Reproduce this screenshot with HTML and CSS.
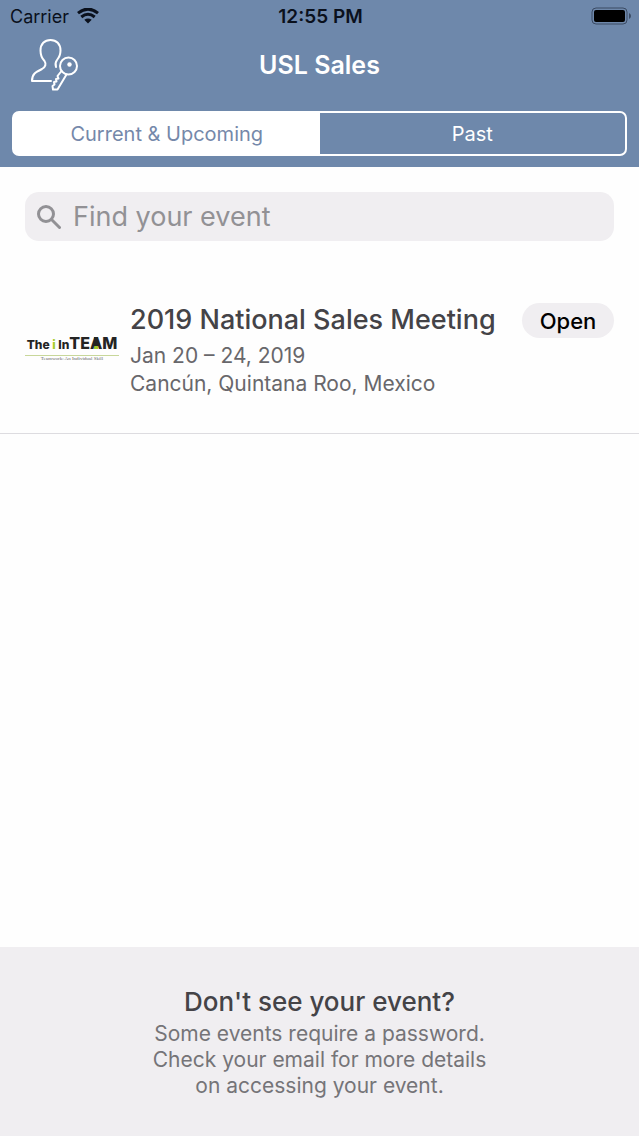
FILE: index.html
```html
<!DOCTYPE html>
<html lang="en">
<head>
  <meta charset="UTF-8">
  <meta name="viewport" content="width=device-width, initial-scale=1.0">
  <title>USL Sales</title>
  <link rel="stylesheet" href="styles.css">
</head>
<body>

  <header class="header">
    <div class="status-bar">
      <div class="carrier">
        <span>Carrier</span>
        <svg class="wifi" viewBox="0 0 22 16" aria-hidden="true">
          <path d="M1 5.2 Q11 -3 21 5.2" />
          <path d="M4.3 9 Q11 3.4 17.7 9" />
          <path class="wifi-dot" d="M7.3 11.8 Q11 9 14.7 11.8 L11 15.6 Z" />
        </svg>
      </div>
      <span class="time">12:55 PM</span>
      <svg class="battery" viewBox="0 0 40 18" aria-hidden="true">
        <rect class="battery-case" x="1" y="1" width="35" height="16" rx="4" />
        <rect x="3" y="3" width="31" height="12" rx="2" />
        <path class="battery-tip" d="M38 6 Q40 7 40 9 Q40 11 38 12 Z" />
      </svg>
    </div>

    <div class="nav-bar">
      <button class="login" type="button" aria-label="Log in">
        <svg viewBox="0 0 48 52" aria-hidden="true">
          <path d="M26 28 C25 25 25 23.500 27 21 C29.500 18 30.500 15 30.500 11.500 C30.500 5 26.500 1 20.500 1 C14.500 1 10.500 5 10.500 11.500 C10.500 16 12 19.500 14.500 22 C16.500 25 15.500 28 12 30 C5 33.500 2 35 2 42 H21" />
          <circle cx="38.500" cy="27" r="8.500" />
          <circle class="key-hole" cx="39.500" cy="25.500" r="2.200" />
          <path d="M31.500 32 L27.500 37 L28.500 39.500 L26 40 L26.500 42.500 L24 43 L24.500 45.500 L22.500 47 L23 50.500 L27.500 50.500 L36.500 35.500" />
        </svg>
      </button>
      <h1>USL Sales</h1>
    </div>

    <div class="tabs">
      <button class="tab active" type="button" aria-pressed="true">Current &amp; Upcoming</button>
      <button class="tab" type="button" aria-pressed="false">Past</button>
    </div>
  </header>

  <main class="content">
    <label class="search">
      <svg viewBox="0 0 24 24" aria-hidden="true">
        <circle cx="9" cy="9" r="7.500" />
        <path d="M14.500 14.500 L22.500 22.500" />
      </svg>
      <input type="search" placeholder="Find your event" aria-label="Find your event">
    </label>

    <article class="event">
      <div class="logo">
        <div class="logo-name">The <i>i</i> In<b>TE<span class="logo-a">A</span>M</b></div>
        <div class="logo-tagline">Teamwork: An Individual Skill</div>
      </div>
      <div class="event-info">
        <h2>2019 National Sales Meeting</h2>
        <p>Jan 20 – 24, 2019</p>
        <p>Cancún, Quintana Roo, Mexico</p>
      </div>
      <button class="open" type="button">Open</button>
    </article>
  </main>

  <footer class="help">
    <h2>Don't see your event?</h2>
    <p>Some events require a password.<br>Check your email for more details<br>on accessing your event.</p>
  </footer>

</body>
</html>
```

FILE: styles.css
```css
* {
  box-sizing: border-box;
}
body {
  font-family: Inter, "Liberation Sans", sans-serif;
  display: flex;
  flex-direction: column;
  min-height: 100vh;
  margin: 0;
  background-color: #fefefe;
}
h1, h2, p {
  margin: 0;
}
h2 {
  font-size: 26px;
  font-weight: 500;
  line-height: 34px;
  color: #444347;
}
button {
  padding: 0;
  font-family: inherit;
  border: none;
  cursor: pointer;
}
svg {
  display: block;
}

.header {
  padding-bottom: 11px;
  background-color: #6e88ab;
}
.status-bar {
  display: grid;
  grid-template-columns: 1fr auto 1fr;
  align-items: center;
  height: 32px;
  padding: 0 8px 0 10px;
  font-size: 18px;
  color: #0a101c;
}
.carrier {
  display: flex;
  align-items: center;
  gap: 8px;
}
.wifi {
  width: 22px;
  height: 16px;
  fill: none;
  stroke: #0a101c;
  stroke-width: 3;
}
.wifi .wifi-dot {
  fill: #0a101c;
  stroke: none;
}
.time {
  font-size: 19px;
  font-weight: 600;
}
.battery {
  justify-self: end;
  width: 40px;
  height: 18px;
}
.battery-case {
  fill: none;
  stroke: #3a4a63;
  stroke-width: 1;
}
.battery-tip {
  fill: #3a4a63;
}
.nav-bar {
  display: grid;
  grid-template-columns: 1fr auto 1fr;
  align-items: center;
  height: 66px;
  padding: 0 30px;
}
.nav-bar h1 {
  font-size: 25px;
  font-weight: 600;
  color: #fff;
}
.login {
  justify-self: start;
  background: none;
}
.login svg {
  width: 48px;
  height: 52px;
  fill: none;
  stroke: #fff;
  stroke-width: 2;
  stroke-linejoin: round;
  stroke-linecap: round;
}
.login .key-hole {
  fill: #fff;
  stroke: none;
}
.tabs {
  display: flex;
  height: 45px;
  margin: 13px 12px 0;
  border: 2px solid #fff;
  border-radius: 7px;
  background: linear-gradient(to right, #fff 50%, #6e88ab 50%);
  overflow: hidden;
}
.tab {
  flex: 1;
  font-size: 20px;
  color: #fff;
  background: none;
}
.tab.active {
  color: #7588aa;
  background-color: #fff;
}

.content {
  flex: 1;
}
.search {
  display: flex;
  align-items: center;
  gap: 12px;
  height: 49px;
  margin: 25px 25px 0;
  padding: 0 12px;
  background-color: #f0eef1;
  border-radius: 14px;
}
.search svg {
  width: 24px;
  height: 24px;
  fill: none;
  stroke: #929195;
  stroke-width: 3;
  stroke-linecap: round;
}
.search input {
  flex: 1;
  min-width: 0;
  padding: 0;
  font-family: inherit;
  font-size: 27px;
  color: #444347;
  background: none;
  border: none;
  outline: none;
}
.search input::placeholder {
  color: #929195;
}
.event {
  display: flex;
  align-items: flex-start;
  margin-top: 24px;
  padding: 38px 25px 35px;
  border-bottom: 1px solid #dddce0;
}
.logo {
  flex: none;
  width: 94px;
  margin: 30px 11px 0 0;
  text-align: center;
  white-space: nowrap;
}
.logo-name {
  font-size: 12px;
  font-weight: 800;
  line-height: 20px;
  color: #242424;
  border-bottom: 1px solid #c8d79a;
}
.logo-name i {
  font-style: normal;
  color: #a5cc2c;
}
.logo-name b {
  font-size: 16px;
  font-weight: 800;
}
.logo-name .logo-a {
  background: linear-gradient(#242424 60%, #a5cc2c 60%) no-repeat center / 4px 12px;
}
.logo-tagline {
  font-family: "Liberation Serif", serif;
  font-size: 5px;
  line-height: 6px;
  color: #666;
}
.event-info {
  flex: 1;
  white-space: nowrap;
}
.event-info h2 {
  margin-bottom: 5px;
  font-size: 27px;
}
.event-info p {
  font-size: 21px;
  line-height: 28px;
  color: #68676b;
}
.open {
  width: 92px;
  height: 35px;
  font-size: 22px;
  font-weight: 500;
  color: #000;
  background-color: #f0eef1;
  border-radius: 18px;
}

.help {
  padding: 38px 25px 37px;
  text-align: center;
  background-color: #f0eef1;
}
.help p {
  margin-top: 2px;
  font-size: 21px;
  line-height: 26px;
  color: #757478;
}
```
